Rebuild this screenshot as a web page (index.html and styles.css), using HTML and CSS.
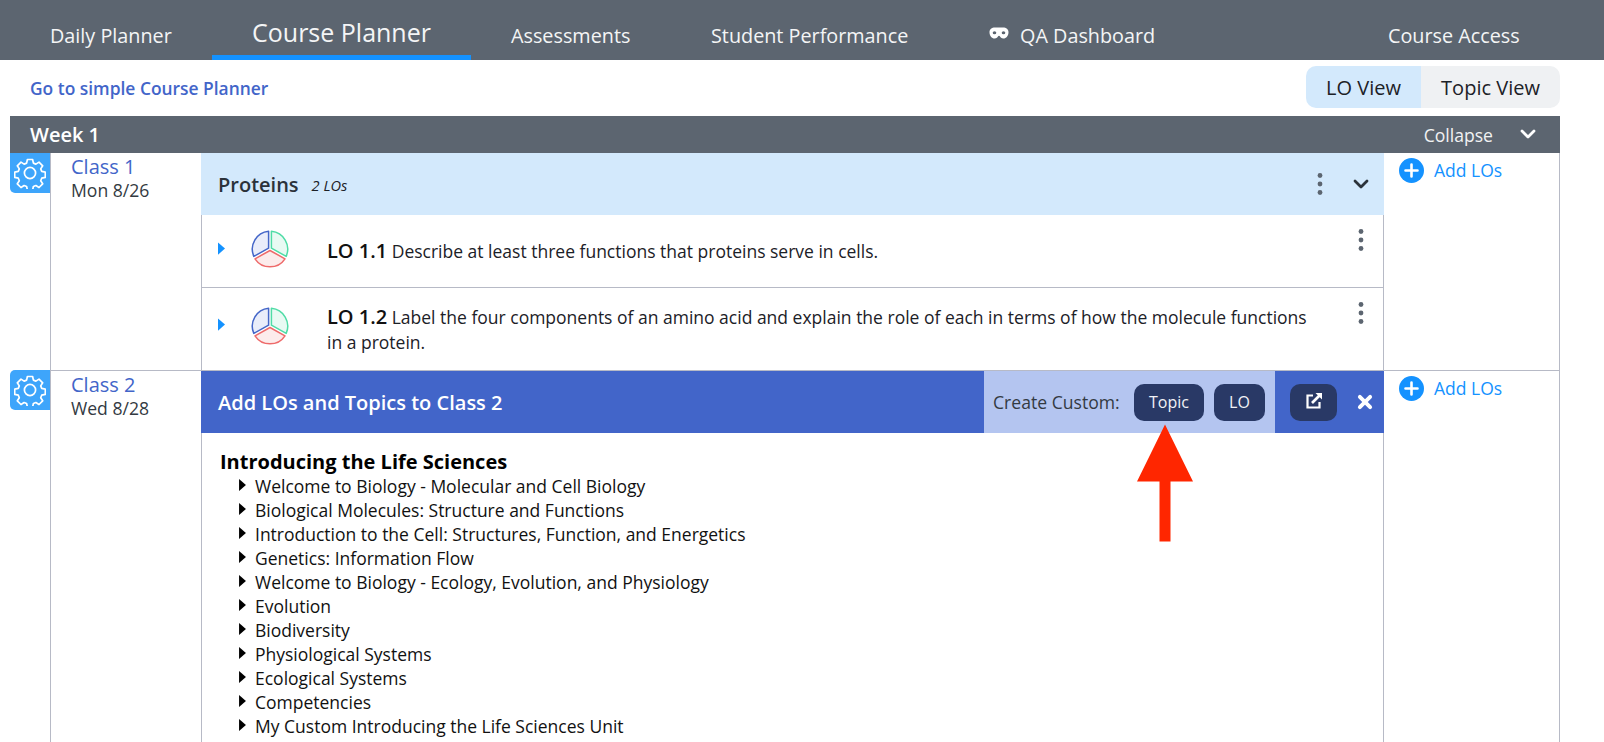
FILE: index.html
```html
<!DOCTYPE html>
<html lang="en">
<head>
<meta charset="utf-8">
<title>Course Planner</title>
<link rel="stylesheet" href="styles.css">
</head>
<body>
<svg class="defs" width="0" height="0" aria-hidden="true">
  <defs>
    <symbol id="gear" viewBox="0 0 32 32">
      <path d="M13.400 2.500h5.200l.8 3.600 2.500 1 3.100-2 3.700 3.700-2 3.100 1 2.500 3.600.8v5.200l-3.600.8-1 2.500 2 3.100-3.700 3.700-3.100-2-2.500 1-.8 3.600h-5.200l-.8-3.600-2.500-1-3.100 2-3.700-3.700 2-3.100-1-2.500-3.600-.8v-5.200l3.600-.8 1-2.500-2-3.100 3.700-3.700 3.100 2 2.500-1z" fill="none" stroke="#fff" stroke-width="1.700" stroke-linejoin="round"/>
      <circle cx="16" cy="16" r="5.600" fill="none" stroke="#fff" stroke-width="1.700"/>
    </symbol>
    <symbol id="pie" viewBox="0 0 40 40">
      <path d="M18.600 2.300A18 18 0 0 0 3.800 27.400L18.600 19.200Z" fill="#e9edfa" stroke="#4466c8" stroke-width="1.500" stroke-linejoin="round"/>
      <path d="M21.400 2.300A18 18 0 0 1 36.200 27.400L21.400 19.200Z" fill="#e8faf3" stroke="#4fdca6" stroke-width="1.500" stroke-linejoin="round"/>
      <path d="M5 29.800L20 21.500L35 29.800A18 18 0 0 1 5 29.800Z" fill="#fcecec" stroke="#ee6a6a" stroke-width="1.500" stroke-linejoin="round"/>
    </symbol>
    <symbol id="dots" viewBox="0 0 6 24">
      <circle cx="3" cy="3.500" r="2.400"/><circle cx="3" cy="12" r="2.400"/><circle cx="3" cy="20.500" r="2.400"/>
    </symbol>
    <symbol id="plus" viewBox="0 0 25 25">
      <circle cx="12.500" cy="12.500" r="12.500" fill="#1492ff"/>
      <path d="M12.500 6.500v12M6.500 12.500h12" stroke="#fff" stroke-width="2.600" stroke-linecap="round"/>
    </symbol>
    <symbol id="chev" viewBox="0 0 16 10">
      <path d="M2 2l6 6 6-6" fill="none" stroke="currentColor" stroke-width="2.800" stroke-linecap="round" stroke-linejoin="round"/>
    </symbol>
    <symbol id="right" viewBox="0 0 8 14">
      <path d="M0 0L8 7L0 14Z"/>
    </symbol>
  </defs>
</svg>

<nav class="nav">
  <a class="nav-item nav-daily">Daily Planner</a>
  <a class="nav-item nav-active">Course Planner</a>
  <a class="nav-item nav-assess">Assessments</a>
  <a class="nav-item nav-perf">Student Performance</a>
  <a class="nav-item nav-qa">
    <svg class="mask" viewBox="0 0 20 12"><path fill-rule="evenodd" d="M6 0.500h8c3.300 0 5.500 2 5.500 4.700 0 3.300-2.300 6.300-5.100 6.300-2 0-3-1.200-3.500-2.300-.3-.7-1.500-.7-1.800 0-.5 1.100-1.500 2.300-3.500 2.300C2.800 11.500.5 8.500.5 5.200.5 2.500 2.700.5 6 .5ZM5.500 4.300a1.800 1.500 0 1 0 0 3 1.800 1.500 0 0 0 0-3ZM14.500 4.300a1.800 1.500 0 1 0 0 3 1.800 1.500 0 0 0 0-3Z" fill="#fff"/></svg>
    QA Dashboard
  </a>
  <a class="nav-item nav-access">Course Access</a>
</nav>

<div class="subbar">
  <a class="simple-link">Go to simple Course Planner</a>
  <div class="toggle">
    <span class="toggle-on">LO View</span>
    <span class="toggle-off">Topic View</span>
  </div>
</div>

<section class="week">
  <header class="week-bar">
    <span class="week-title">Week 1</span>
    <span class="collapse">Collapse</span>
    <svg class="week-chev"><use href="#chev"/></svg>
  </header>

  <div class="class-row row-one">
    <div class="gear-col"><span class="gear-box"><svg class="gear"><use href="#gear"/></svg></span></div>
    <div class="class-col">
      <a class="class-name">Class 1</a>
      <div class="class-date">Mon 8/26</div>
    </div>
    <div class="main-col">
      <div class="topic-head">
        <span class="topic-name">Proteins</span>
        <span class="topic-count">2 LOs</span>
        <svg class="dots topic-dots"><use href="#dots"/></svg>
        <svg class="topic-chev"><use href="#chev"/></svg>
      </div>
      <div class="lo lo-first">
        <svg class="lo-arrow"><use href="#right"/></svg>
        <svg class="pie"><use href="#pie"/></svg>
        <p class="lo-text"><b>LO 1.1</b> Describe at least three functions that proteins serve in cells.</p>
        <svg class="dots lo-dots"><use href="#dots"/></svg>
      </div>
      <div class="lo lo-second">
        <svg class="lo-arrow"><use href="#right"/></svg>
        <svg class="pie"><use href="#pie"/></svg>
        <p class="lo-text"><b>LO 1.2</b> Label the four components of an amino acid and explain the role of each in terms of how the molecule functions in a protein.</p>
        <svg class="dots lo-dots"><use href="#dots"/></svg>
      </div>
    </div>
    <div class="add-col"><a class="add-los"><svg class="plus"><use href="#plus"/></svg>Add LOs</a></div>
  </div>

  <div class="class-row row-two">
    <div class="gear-col"><span class="gear-box"><svg class="gear"><use href="#gear"/></svg></span></div>
    <div class="class-col">
      <a class="class-name">Class 2</a>
      <div class="class-date">Wed 8/28</div>
    </div>
    <div class="main-col">
      <div class="add-head">
        <span class="add-title">Add LOs and Topics to Class 2</span>
        <div class="custom">
          <span class="custom-label">Create Custom:</span>
          <button class="dark-btn btn-topic">Topic</button>
          <button class="dark-btn btn-lo">LO</button>
        </div>
        <button class="dark-btn btn-open">
          <svg class="open-icon" viewBox="0 0 18 18"><path d="M8 3.500H2.500v12h12V10" fill="none" stroke="#fff" stroke-width="2.200"/><path d="M7 11L15 3" stroke="#fff" stroke-width="2.600"/><path d="M10.500 1H17V7.500Z" fill="#fff"/></svg>
        </button>
        <svg class="close-icon" viewBox="0 0 14 14"><path d="M2.500 2.500l9 9M11.500 2.500l-9 9" stroke="#fff" stroke-width="3.400" stroke-linecap="round"/></svg>
        <svg class="red-arrow" viewBox="0 0 56 117"><path d="M28 0L56 57H33.500V117H22.500V57H0Z" fill="#ff2600"/></svg>
      </div>
      <div class="tree">
        <h2 class="tree-title">Introducing the Life Sciences</h2>
        <ul class="tree-list">
          <li><svg class="tree-arrow"><use href="#right"/></svg>Welcome to Biology - Molecular and Cell Biology</li>
          <li><svg class="tree-arrow"><use href="#right"/></svg>Biological Molecules: Structure and Functions</li>
          <li><svg class="tree-arrow"><use href="#right"/></svg>Introduction to the Cell: Structures, Function, and Energetics</li>
          <li><svg class="tree-arrow"><use href="#right"/></svg>Genetics: Information Flow</li>
          <li><svg class="tree-arrow"><use href="#right"/></svg>Welcome to Biology - Ecology, Evolution, and Physiology</li>
          <li><svg class="tree-arrow"><use href="#right"/></svg>Evolution</li>
          <li><svg class="tree-arrow"><use href="#right"/></svg>Biodiversity</li>
          <li><svg class="tree-arrow"><use href="#right"/></svg>Physiological Systems</li>
          <li><svg class="tree-arrow"><use href="#right"/></svg>Ecological Systems</li>
          <li><svg class="tree-arrow"><use href="#right"/></svg>Competencies</li>
          <li><svg class="tree-arrow"><use href="#right"/></svg>My Custom Introducing the Life Sciences Unit</li>
        </ul>
      </div>
    </div>
    <div class="add-col"><a class="add-los"><svg class="plus"><use href="#plus"/></svg>Add LOs</a></div>
  </div>
</section>
</body>
</html>
```
FILE: styles.css
```css
* { box-sizing: border-box; }
html, body { margin: 0; height: 742px; overflow: hidden; background: #fff; }
body { font-family: "Open Sans", "Liberation Sans", sans-serif; color: #1c2127; }
.defs { position: absolute; }

.nav { height: 60px; background: #5c6570; display: flex; align-items: stretch; color: #fff; }
.nav-item { font-size: 19.8px; line-height: 27px; padding-top: 22px; white-space: nowrap; color: #f4f5f6; }
.nav-daily { margin-left: 50px; width: 162px; }
.nav-active { width: 259px; height: 60px; border-bottom: 5px solid #1492ff; font-size: 25px; line-height: 34px; padding-top: 15px; text-align: center; }
.nav-assess { margin-left: 40px; width: 200px; }
.nav-perf { width: 278px; }
.nav-qa { width: 399px; display: flex; align-items: flex-start; }
.mask { width: 20px; height: 12px; margin: 5px 11px 0 0; }
.nav-access { width: 150px; }

.subbar { height: 56px; display: flex; align-items: center; justify-content: space-between; padding: 0 44px 0 30px; }
.simple-link { color: #4265c9; font-size: 17.4px; font-weight: 600; }
.toggle { display: flex; height: 42px; border-radius: 10px; overflow: hidden; font-size: 20px; line-height: 43px; margin-bottom: 2px; }
.toggle-on { width: 115px; background: #d3e9fc; text-align: center; }
.toggle-off { width: 139px; background: #eff1f3; text-align: center; }

.week { margin: 0 44px 0 10px; }
.week-bar { height: 37px; background: #5c6570; color: #fff; display: flex; align-items: center; padding: 0 24px 0 20px; }
.week-title { font-size: 20px; font-weight: 600; flex: 1; }
.collapse { font-size: 17.6px; color: #f1f2f3; margin-right: 27px; }
.week-chev { width: 16px; height: 10px; margin-bottom: 1px; color: #fff; }

.class-row { display: grid; grid-template-columns: 40px 151px 1183px 176px; }
.row-one { height: 217px; }
.row-two { height: 400px; }
.gear-col { width: 40px; }
.gear-box { display: flex; width: 40px; height: 40px; align-items: center; justify-content: center; background: #3ea5fb; border-radius: 5px 0 0 5px; }
.row-one .gear-box { border-radius: 0 0 0 5px; }
.gear { width: 32px; height: 32px; }
.class-col { border-left: 1px solid #b7bac6; padding: 1px 0 0 20px; }
.class-name { display: block; color: #4265c9; font-size: 20px; line-height: 25px; }
.class-date { font-size: 17.6px; line-height: 22px; color: #333a42; }
.row-two .class-col, .row-two .add-col { border-top: 1px solid #b7bac6; }
.main-col { min-width: 0; }
.add-col { border-right: 1px solid #b7bac6; padding: 5px 0 0 15px; }
.add-los { display: flex; align-items: center; gap: 10px; color: #1492ff; font-size: 17.5px; line-height: 25px; }
.plus { width: 25px; height: 25px; }

.topic-head { height: 62px; background: #d3e9fc; display: flex; align-items: center; padding: 0 15px 0 17px; }
.topic-name { font-size: 20px; font-weight: 600; color: #2b323a; }
.topic-count { font-size: 14.6px; font-style: italic; font-weight: 500; margin-left: 13px; flex: 1; padding-top: 2px; }
.dots { width: 6px; height: 24px; fill: #5c6570; }
.topic-chev { width: 16px; height: 10px; margin-left: 30px; color: #2b323a; }

.lo { display: flex; align-items: flex-start; border-left: 1px solid #b7bac6; border-right: 1px solid #b7bac6; border-bottom: 1px solid #b7bac6; padding-left: 16px; }
.lo-first { height: 73px; }
.lo-second { height: 82px; border-bottom: 0; }
.lo-arrow { width: 7px; height: 13px; fill: #1492ff; flex: none; }
.pie { width: 40px; height: 40px; flex: none; margin-left: 25px; }
.lo-first .lo-arrow { margin-top: 27px; }
.lo-first .pie { margin-top: 14px; }
.lo-second .lo-arrow { margin-top: 30px; }
.lo-second .pie { margin-top: 18px; }
.lo-text { margin: 0 0 0 37px; width: 985px; font-size: 17.5px; line-height: 25px; color: #1c2127; padding-top: 23px; }
.lo-second .lo-text { padding-top: 16px; }
.lo-text b { font-size: 20px; font-weight: 600; color: #111; }
.lo-dots { margin: 13px 0 0 46px; flex: none; }

.add-head { height: 63px; background: #4265c9; display: flex; align-items: center; position: relative; border-top: 1px solid #b7bac6; }
.add-title { color: #fff; font-size: 20px; font-weight: 600; width: 783px; padding-left: 17px; }
.custom { width: 291px; align-self: stretch; background: #b4c5f0; display: flex; align-items: center; padding-left: 9px; }
.custom-label { font-size: 17.6px; color: #333a42; width: 141px; }
.dark-btn { border: 0; background: #293966; color: #f1f2f6; font-family: inherit; font-size: 16px; height: 37px; border-radius: 10px; padding: 0; display: flex; align-items: center; justify-content: center; }
.btn-topic { width: 70px; margin-right: 10px; }
.btn-lo { width: 51px; }
.btn-open { width: 47px; margin-left: 15px; }
.open-icon { width: 18px; height: 18px; margin-bottom: 3px; }
.close-icon { width: 16px; height: 16px; margin-left: 20px; }
.red-arrow { position: absolute; left: 936px; top: 53px; width: 56px; height: 118px; }

.tree { border-left: 1px solid #b7bac6; border-right: 1px solid #b7bac6; height: 337px; padding: 17px 0 0 18px; }
.tree-title { margin: 0; font-size: 20px; line-height: 24px; font-weight: 700; color: #000; }
.tree-list { list-style: none; margin: 0; padding: 0 0 0 19px; }
.tree-list li { font-size: 17.5px; line-height: 24px; height: 24px; color: #111; display: flex; align-items: center; }
.tree-arrow { width: 7px; height: 12px; fill: #000; margin-right: 9px; margin-bottom: 3px; flex: none; }
```
